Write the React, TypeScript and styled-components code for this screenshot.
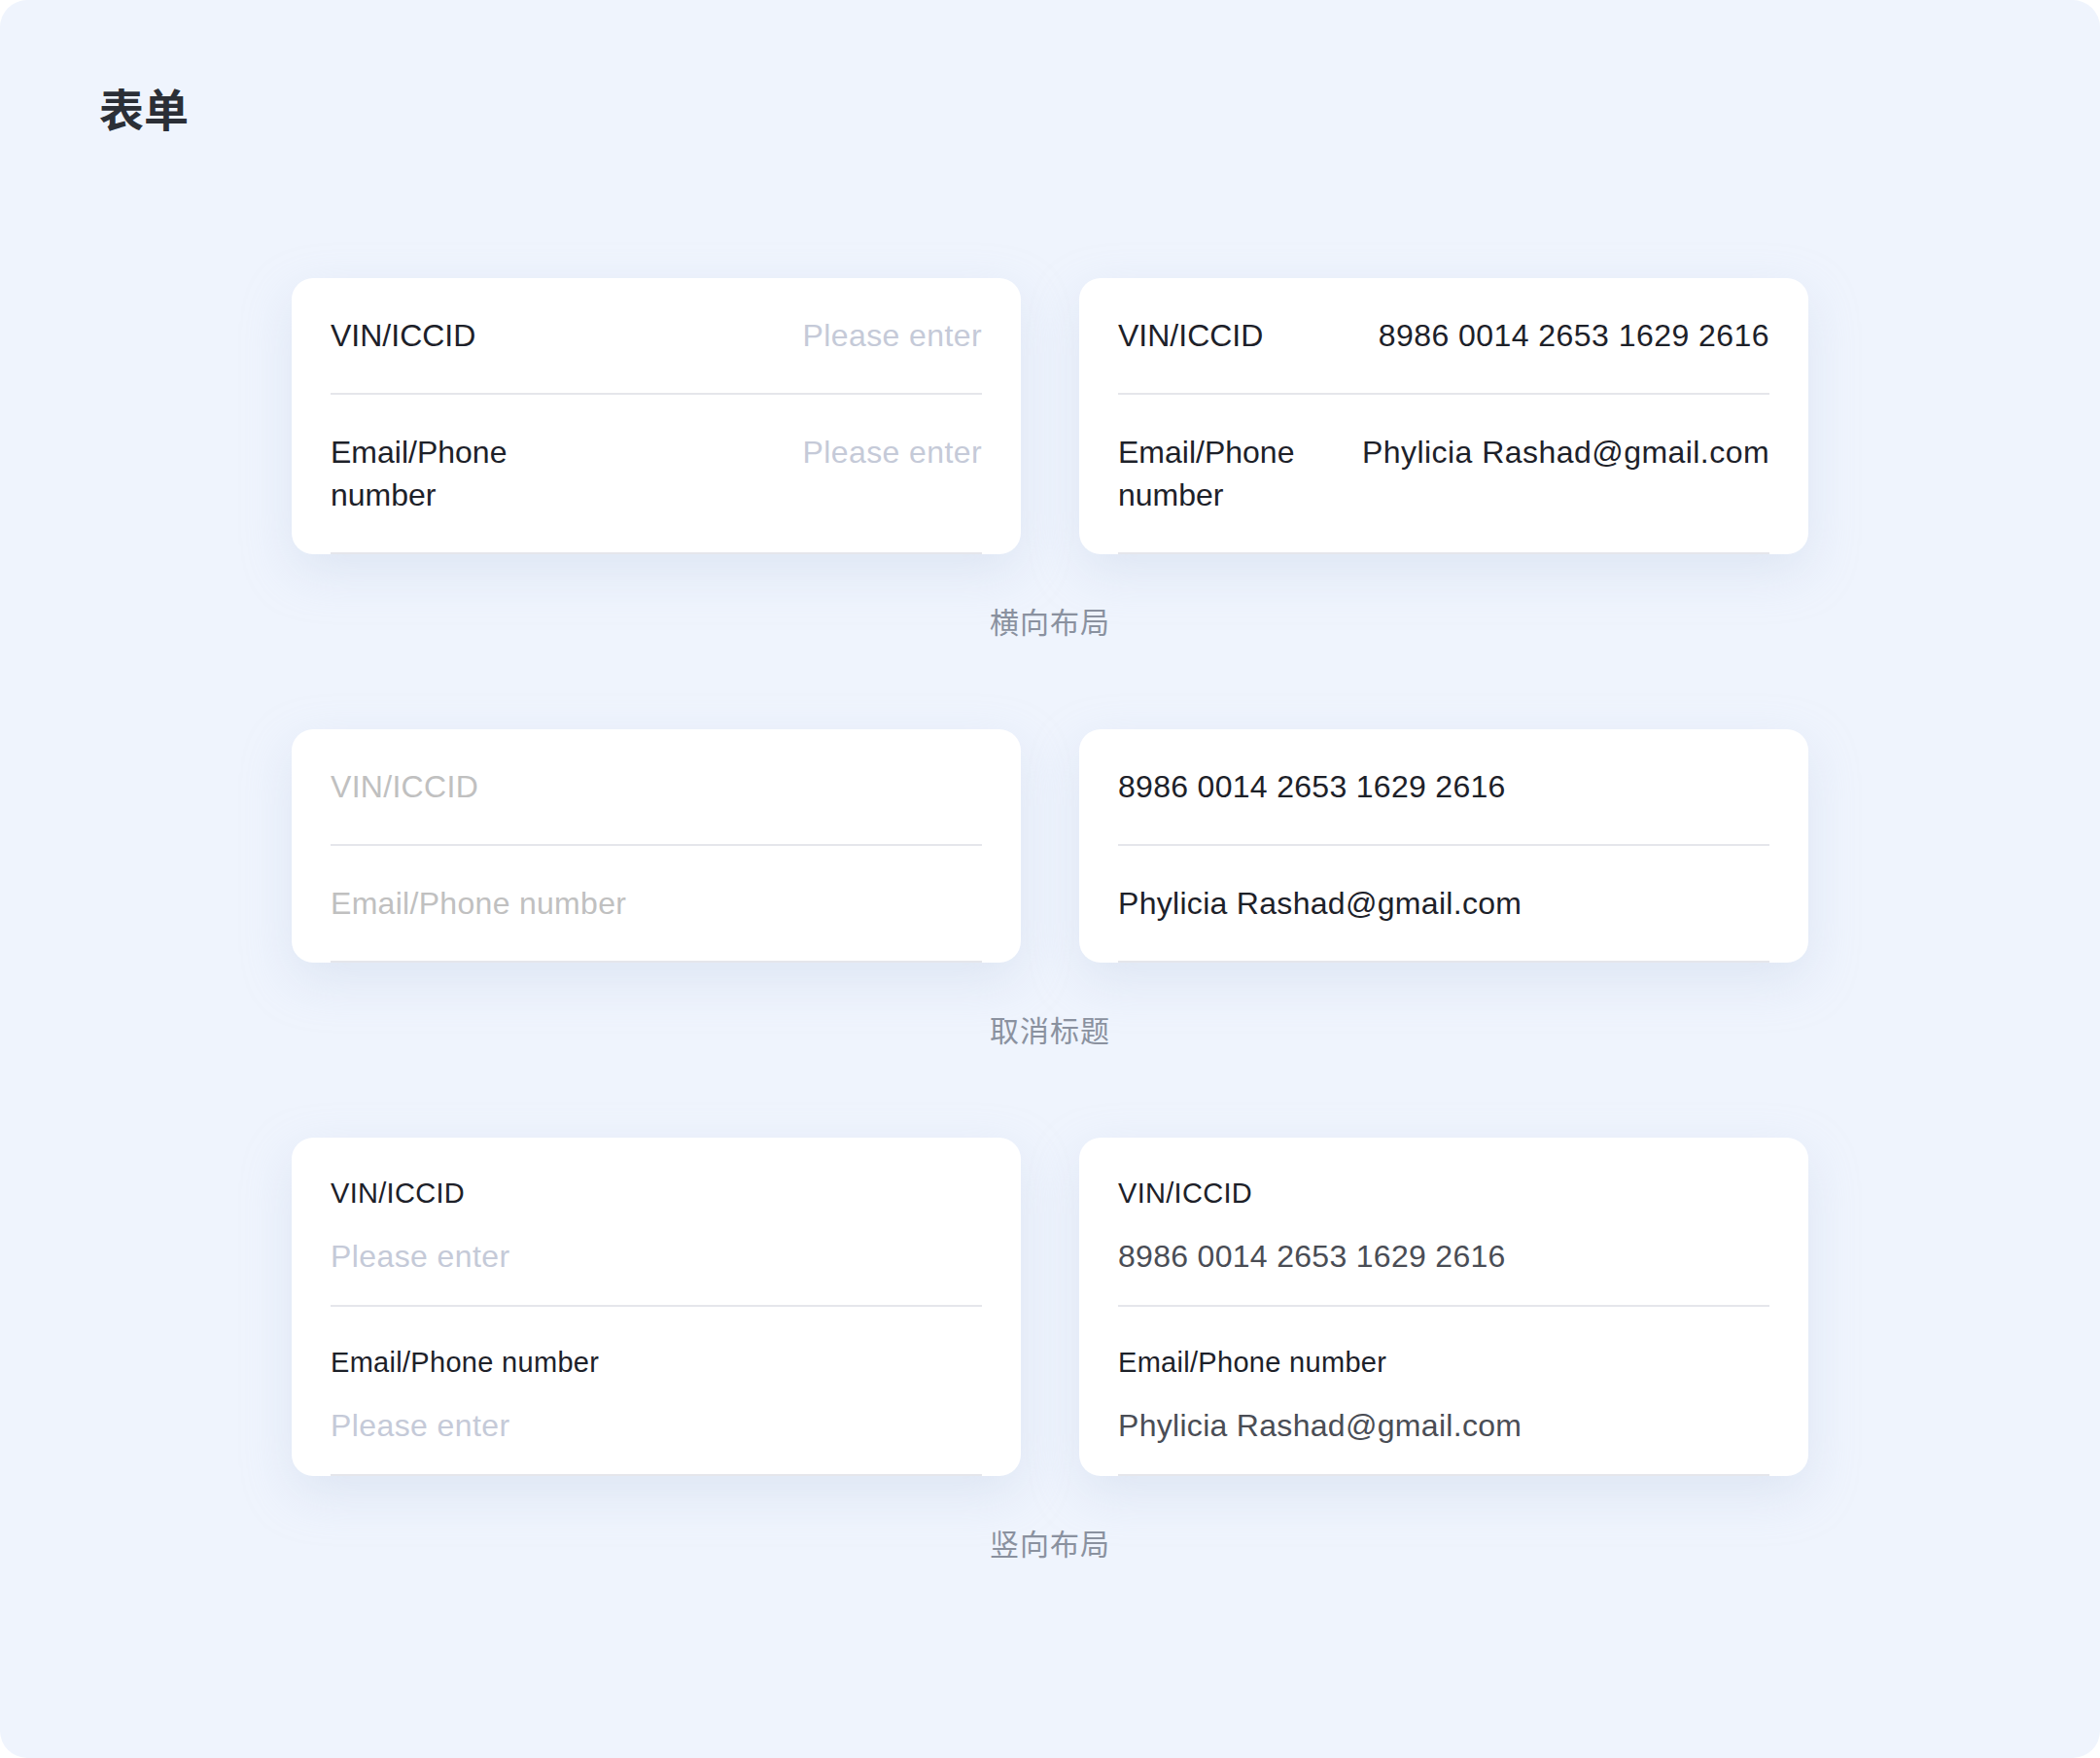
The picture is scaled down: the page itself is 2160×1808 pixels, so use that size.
import React from "react";
import styled, { createGlobalStyle } from "styled-components";

type Field = {
  label: string;
  value?: string;
};

const GlobalStyle = createGlobalStyle`
  html, body {
    margin: 0;
    padding: 0;
    background: #ffffff;
  }
  * {
    box-sizing: border-box;
  }
  body {
    font-family: "Liberation Sans", "Noto Sans CJK SC", Arial, sans-serif;
  }
`;

const emptyFields: Field[] = [{ label: "VIN/ICCID" }, { label: "Email/Phone number" }];
const filledFields: Field[] = [
  { label: "VIN/ICCID", value: "8986 0014 2653 1629 2616" },
  { label: "Email/Phone number", value: "Phylicia Rashad@gmail.com" },
];

const HorizontalCard: React.FC<{ fields: Field[] }> = ({ fields }) => (
  <Card>
    {fields.map((f) => (
      <HRow key={f.label}>
        <HLabel>{f.label}</HLabel>
        {f.value ? <HValue>{f.value}</HValue> : <Placeholder>Please enter</Placeholder>}
      </HRow>
    ))}
  </Card>
);

const NoTitleCard: React.FC<{ fields: Field[] }> = ({ fields }) => (
  <Card>
    {fields.map((f) => (
      <HRow key={f.label}>
        <Plain $empty={!f.value}>{f.value ?? f.label}</Plain>
      </HRow>
    ))}
  </Card>
);

const VerticalCard: React.FC<{ fields: Field[] }> = ({ fields }) => (
  <Card>
    {fields.map((f) => (
      <VRow key={f.label}>
        <VLabel>{f.label}</VLabel>
        {f.value ? <VValue>{f.value}</VValue> : <VPlaceholder>Please enter</VPlaceholder>}
      </VRow>
    ))}
  </Card>
);

const App: React.FC = () => {
  return (
    <>
      <GlobalStyle />
      <Page>
        <Title>表单</Title>
        <Sections>
          <Section>
            <Cards>
              <HorizontalCard fields={emptyFields} />
              <HorizontalCard fields={filledFields} />
            </Cards>
            <Caption>横向布局</Caption>
          </Section>
          <Section>
            <Cards>
              <NoTitleCard fields={emptyFields} />
              <NoTitleCard fields={filledFields} />
            </Cards>
            <Caption>取消标题</Caption>
          </Section>
          <Section>
            <Cards>
              <VerticalCard fields={emptyFields} />
              <VerticalCard fields={filledFields} />
            </Cards>
            <Caption>竖向布局</Caption>
          </Section>
        </Sections>
      </Page>
    </>
  );
};

export default App;

const Page = styled.div`
  width: 2160px;
  height: 1808px;
  background: #eff4fd;
  border-radius: 28px;
  padding: 80px 0 0 102px;
  overflow: hidden;
`;

const Title = styled.h1`
  margin: 0;
  font-family: "Noto Sans CJK SC", sans-serif;
  font-size: 46px;
  line-height: 60px;
  font-weight: 700;
  color: #2b2f36;
`;

const Sections = styled.div`
  display: flex;
  flex-direction: column;
  gap: 92px;
  margin: 146px 0 0 198px;
  width: 1560px;
`;

const Section = styled.section`
  display: flex;
  flex-direction: column;
  align-items: center;
`;

const Cards = styled.div`
  display: grid;
  grid-template-columns: 750px 750px;
  gap: 60px;
`;

const Card = styled.div`
  background: #ffffff;
  border-radius: 22px;
  padding: 0 40px;
  box-shadow: 0 18px 50px rgba(190, 202, 226, 0.35);
`;

const HRow = styled.div`
  display: flex;
  justify-content: space-between;
  align-items: flex-start;
  gap: 40px;
  padding: 37px 0;
  border-bottom: 2px solid #e5e6eb;
  font-size: 32px;
  line-height: 44px;
`;

const HLabel = styled.div`
  color: #1d2129;
  max-width: 230px;
`;

const HValue = styled.div`
  color: #1d2129;
  text-align: right;
  white-space: nowrap;
  letter-spacing: 0.45px;
`;

const Placeholder = styled.div`
  color: #c5cad8;
  text-align: right;
  white-space: nowrap;
  letter-spacing: 0.4px;
`;

const Plain = styled.div<{ $empty: boolean }>`
  color: ${(p) => (p.$empty ? "#c0c0c0" : "#1d2129")};
  white-space: nowrap;
  letter-spacing: 0.3px;
`;

const VRow = styled.div`
  display: flex;
  flex-direction: column;
  gap: 22px;
  padding: 36px 0 28px;
  border-bottom: 2px solid #e5e6eb;
`;

const VLabel = styled.div`
  font-size: 29px;
  line-height: 42px;
  font-weight: 500;
  letter-spacing: 0.3px;
  color: #1d2129;
`;

const VValue = styled.div`
  font-size: 32px;
  line-height: 44px;
  color: #4a4d55;
  letter-spacing: 0.3px;
`;

const VPlaceholder = styled.div`
  font-size: 32px;
  line-height: 44px;
  color: #c5cad8;
  letter-spacing: 0.4px;
`;

const Caption = styled.div`
  margin-top: 48px;
  font-family: "Noto Sans CJK SC", sans-serif;
  font-size: 30px;
  line-height: 40px;
  letter-spacing: 1px;
  color: #8a919f;
`;
